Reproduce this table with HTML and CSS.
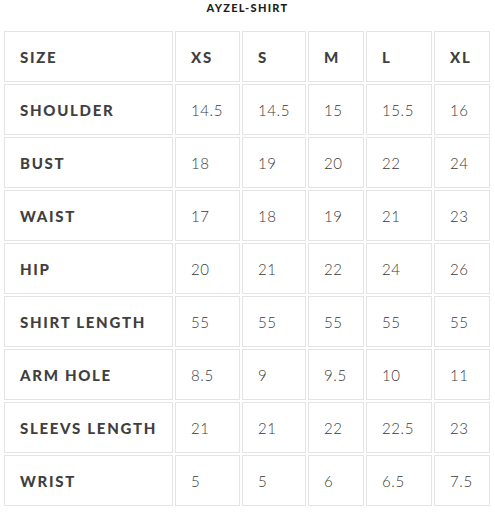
FILE: index.html
```html
<!DOCTYPE html>
<html>
<head>
<meta charset="utf-8">
<link rel="stylesheet" href="styles.css">
</head>
<body>
<div class="wrap">
  <h2 class="title">AYZEL-SHIRT</h2>
  <table class="chart">
    <colgroup>
      <col class="c1"><col class="c2"><col class="c3"><col class="c4"><col class="c5"><col class="c6">
    </colgroup>
    <tr class="head"><th>SIZE</th><th>XS</th><th>S</th><th>M</th><th>L</th><th>XL</th></tr>
    <tr><th>SHOULDER</th><td>14.5</td><td>14.5</td><td>15</td><td>15.5</td><td>16</td></tr>
    <tr><th>BUST</th><td>18</td><td>19</td><td>20</td><td>22</td><td>24</td></tr>
    <tr><th>WAIST</th><td>17</td><td>18</td><td>19</td><td>21</td><td>23</td></tr>
    <tr><th>HIP</th><td>20</td><td>21</td><td>22</td><td>24</td><td>26</td></tr>
    <tr><th>SHIRT LENGTH</th><td>55</td><td>55</td><td>55</td><td>55</td><td>55</td></tr>
    <tr><th>ARM HOLE</th><td>8.5</td><td>9</td><td>9.5</td><td>10</td><td>11</td></tr>
    <tr><th>SLEEVS LENGTH</th><td>21</td><td>21</td><td>22</td><td>22.5</td><td>23</td></tr>
    <tr><th>WRIST</th><td>5</td><td>5</td><td>6</td><td>6.5</td><td>7.5</td></tr>
  </table>
</div>
</body>
</html>
```
FILE: styles.css
```css
html, body {
  margin: 0;
  padding: 0;
  background: #fff;
}
.wrap {
  padding: 0 2px;
  font-family: "Lato", "Liberation Sans", sans-serif;
}
.title {
  margin: 0;
  padding-top: 1px;
  height: 28px;
  text-align: center;
  font-size: 11px;
  line-height: 13px;
  font-weight: 900;
  letter-spacing: 1.3px;
  color: #1e1e1e;
}
.chart {
  border-collapse: separate;
  border-spacing: 2px;
  table-layout: fixed;
  width: 489px;
}
.c1 { width: 169px; }
.c2 { width: 65px; }
.c3 { width: 64px; }
.c4 { width: 56px; }
.c5 { width: 66px; }
.c6 { width: 56px; }
.chart th, .chart td {
  box-sizing: border-box;
  height: 51px;
  border: 1px solid #e4e4e4;
  padding: 0 0 0 15px;
  text-align: left;
  vertical-align: middle;
  font-size: 15px;
  white-space: nowrap;
}
.chart th {
  font-weight: 900;
  letter-spacing: 1.7px;
  color: #3f3f3f;
}
.chart td {
  font-weight: 300;
  color: #3a3a3a;
  letter-spacing: 0.6px;
}
```
